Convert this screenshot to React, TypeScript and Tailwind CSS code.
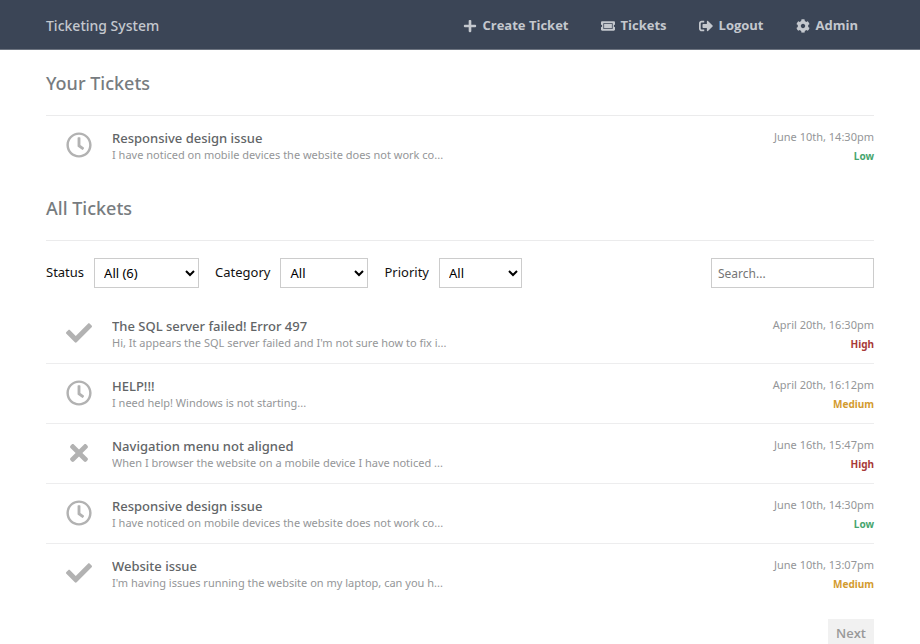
import { useState } from 'react';
import { FaCheck, FaCog, FaPlus, FaRegClock, FaSignOutAlt, FaTicketAlt, FaTimes } from 'react-icons/fa';

type Status = 'open' | 'resolved' | 'closed';
type Priority = 'Low' | 'Medium' | 'High';

interface Ticket {
  id: number;
  title: string;
  message: string;
  date: string;
  priority: Priority;
  status: Status;
}

const tickets: Ticket[] = [
  { id: 5, title: 'The SQL server failed! Error 497', message: "Hi, It appears the SQL server failed and I'm not sure how to fix i...", date: 'April 20th, 16:30pm', priority: 'High', status: 'resolved' },
  { id: 4, title: 'HELP!!!', message: 'I need help! Windows is not starting...', date: 'April 20th, 16:12pm', priority: 'Medium', status: 'open' },
  { id: 3, title: 'Navigation menu not aligned', message: 'When I browser the website on a mobile device I have noticed ...', date: 'June 16th, 15:47pm', priority: 'High', status: 'closed' },
  { id: 2, title: 'Responsive design issue', message: 'I have noticed on mobile devices the website does not work co...', date: 'June 10th, 14:30pm', priority: 'Low', status: 'open' },
  { id: 1, title: 'Website issue', message: "I'm having issues running the website on my laptop, can you h...", date: 'June 10th, 13:07pm', priority: 'Medium', status: 'resolved' },
];

const navLinks = [
  { label: 'Create Ticket', icon: FaPlus },
  { label: 'Tickets', icon: FaTicketAlt },
  { label: 'Logout', icon: FaSignOutAlt },
  { label: 'Admin', icon: FaCog },
];

const statusIcons = {
  open: FaRegClock,
  resolved: FaCheck,
  closed: FaTimes,
};

const priorityColors = {
  Low: 'text-[#46a56e]',
  Medium: 'text-[#d39b2f]',
  High: 'text-[#a83a3a]',
};

const selectClass = 'h-[30px] border border-[#cccccc] bg-white pl-[5px] text-[13px] text-black';

const TicketRow = ({ ticket }: { ticket: Ticket }) => {
  const Icon = statusIcons[ticket.status];

  return (
    <a href="#" className="flex h-15 items-center">
      <span className="flex w-[66px] shrink-0 justify-center pb-0.5">
        <Icon className="size-[26px] text-[#b2b2b2]" />
      </span>
      <span className="flex min-w-0 flex-1 flex-col">
        <span className="truncate text-[13px] leading-[18px] font-medium text-[#626567]">{ticket.title}</span>
        <span className="truncate text-[11px] leading-4 text-[#949698]">{ticket.message}</span>
      </span>
      <span className="flex shrink-0 flex-col items-end">
        <span className="text-[11px] leading-5 text-[#949698]">{ticket.date}</span>
        <span className={`text-[10px] leading-[18px] font-bold ${priorityColors[ticket.priority]}`}>{ticket.priority}</span>
      </span>
    </a>
  );
};

const App = () => {
  const [search, setSearch] = useState('');

  return (
    <div className="bg-white font-['Noto_Sans',sans-serif]">
      {/* Top bar */}
      <nav className="flex h-[50px] items-center justify-between border-b border-[#6d7480] bg-[#3b4556] px-[46px] pt-0.5 text-[#c4c8ce]">
        <h1 className="text-sm font-medium">Ticketing System</h1>
        <div className="flex gap-8 pr-4">
          {navLinks.map(({ label, icon: Icon }) => (
            <a key={label} href="#" className="flex items-center gap-[6px] font-['Open_Sans','Noto_Sans',sans-serif] text-[13px] font-bold">
              <Icon className="h-[14px] w-auto" />
              {label}
            </a>
          ))}
        </div>
      </nav>

      <main className="px-[46px]">
        <h2 className="border-b border-[#ebebec] pt-[19px] pb-[18px] text-lg leading-7 font-medium text-[#777c80]">Your Tickets</h2>
        <TicketRow ticket={tickets[3]} />

        <h2 className="border-b border-[#ebebec] pt-[18px] pb-[18px] text-lg leading-7 font-medium text-[#777c80]">All Tickets</h2>

        {/* Filters */}
        <form className="flex items-center justify-between pt-[17px] pb-4 text-[13px] text-[#111111]">
          <div className="flex items-center">
            <label htmlFor="status" className="mr-2.5">Status</label>
            <select id="status" className={`mr-4 w-[105px] ${selectClass}`}>
              <option>All (6)</option>
              <option>Open</option>
              <option>Resolved</option>
              <option>Closed</option>
            </select>
            <label htmlFor="category" className="mr-2.5">Category</label>
            <select id="category" className={`mr-4 w-[88px] ${selectClass}`}>
              <option>All</option>
              <option>General</option>
            </select>
            <label htmlFor="priority" className="mr-2.5">Priority</label>
            <select id="priority" className={`w-[83px] ${selectClass}`}>
              <option>All</option>
              <option>Low</option>
              <option>Medium</option>
              <option>High</option>
            </select>
          </div>
          <input
            type="text"
            aria-label="Search tickets"
            placeholder="Search..."
            className="h-[30px] w-[163px] border border-[#cccccc] px-[6px] text-xs placeholder:text-[#757575]"
            value={search}
            onChange={(e) => setSearch(e.target.value)}
          />
        </form>

        <div className="divide-y divide-[#ededee]">
          {tickets.map((ticket) => (
            <TicketRow key={ticket.id} ticket={ticket} />
          ))}
        </div>

        <div className="flex justify-end pt-[15px]">
          <a href="#" className="bg-[#f1f1f1] px-2 py-1 font-['Open_Sans','Noto_Sans',sans-serif] text-[13px] leading-5 font-semibold text-[#999999]">Next</a>
        </div>
      </main>
    </div>
  );
};

export default App;
